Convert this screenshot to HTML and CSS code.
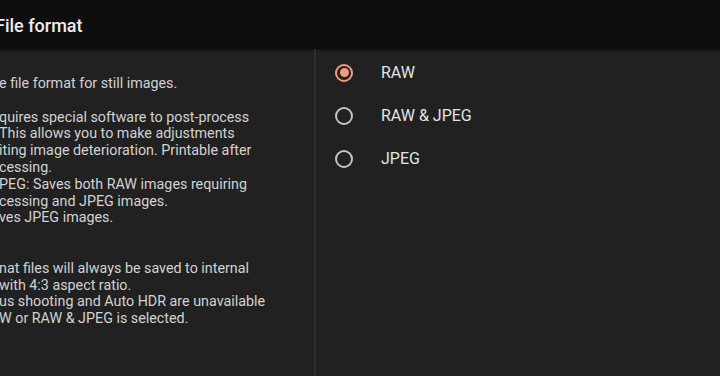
FILE: index.html
```html
<!DOCTYPE html>
<html lang="en">

<head>
    <meta charset="UTF-8">
    <meta name="viewport" content="width=device-width, initial-scale=1.0">
    <title>File format</title>
    <link rel="stylesheet" href="styles.css">
</head>
<body>
    <!-- Title Bar -->
    <header class="title-bar">
        <h1>File format</h1>
    </header>

    <main class="settings">
        <!-- Description -->
        <section class="description">
            <p>e file format for still images.</p>
            <p class="blank">&nbsp;</p>
            <p>quires special software to post-process</p>
            <p>This allows you to make adjustments</p>
            <p>iting image deterioration. Printable after</p>
            <p>cessing.</p>
            <p>PEG: Saves both RAW images requiring</p>
            <p>cessing and JPEG images.</p>
            <p>ves JPEG images.</p>
            <p class="blank">&nbsp;</p>
            <p class="blank">&nbsp;</p>
            <p>nat files will always be saved to internal</p>
            <p>with 4:3 aspect ratio.</p>
            <p>us shooting and Auto HDR are unavailable</p>
            <p>W or RAW &amp; JPEG is selected.</p>
        </section>

        <div class="divider"></div>

        <!-- Options -->
        <section class="options">
            <label class="option selected">
                <span class="radio"></span>
                <span class="option-label">RAW</span>
            </label>
            <label class="option">
                <span class="radio"></span>
                <span class="option-label">RAW &amp; JPEG</span>
            </label>
            <label class="option">
                <span class="radio"></span>
                <span class="option-label">JPEG</span>
            </label>
        </section>
    </main>
</body>

</html>
```

FILE: styles.css
```css
:root {
    --color-header: #0e0e0e;
    --color-background: #212121;
    --color-divider: #2d2d2d;
    --color-title: #ededed;
    --color-text: #d2d2d2;
    --color-label: #e4e4e4;
    --color-radio: #c4c4c4;
    --color-accent: #f29a80;
}

* {
    font-family: "Roboto", sans-serif;
    margin: 0;
    padding: 0;
    box-sizing: border-box;
}

html,
body {
    height: 100%;
    overflow: hidden;
}

body {
    background-color: var(--color-background);
    display: flex;
    flex-direction: column;
}

.title-bar {
    background-color: var(--color-header);
    height: 49px;
    display: flex;
    align-items: center;
    box-shadow: 0 1px 3px rgba(0, 0, 0, 0.6);
    flex-shrink: 0;
}

.title-bar>h1 {
    color: var(--color-title);
    font-size: 18px;
    font-weight: 500;
    margin-left: -5px;
    margin-top: 2px;
}

.settings {
    flex: 1;
    display: flex;
}

.description {
    width: 314px;
    padding-top: 26px;
    color: var(--color-text);
    font-size: 14.3px;
    line-height: 16.8px;
    white-space: nowrap;
    overflow: hidden;
}

.description>p {
    margin-left: -1px;
}

.divider {
    width: 2px;
    background-color: var(--color-divider);
}

.options {
    flex: 1;
    display: flex;
    flex-direction: column;
    padding-top: 2px;
}

.option {
    display: flex;
    align-items: center;
    height: 43px;
    padding-left: 19px;
    gap: 28px;
    cursor: pointer;
}

.radio {
    width: 18px;
    height: 18px;
    border-radius: 50%;
    border: 2px solid var(--color-radio);
    display: flex;
    align-items: center;
    justify-content: center;
}

.option.selected>.radio {
    border-color: var(--color-accent);
}

.option.selected>.radio::after {
    content: "";
    width: 9px;
    height: 9px;
    border-radius: 50%;
    background-color: var(--color-accent);
}

.option-label {
    color: var(--color-label);
    font-size: 16px;
}
```
